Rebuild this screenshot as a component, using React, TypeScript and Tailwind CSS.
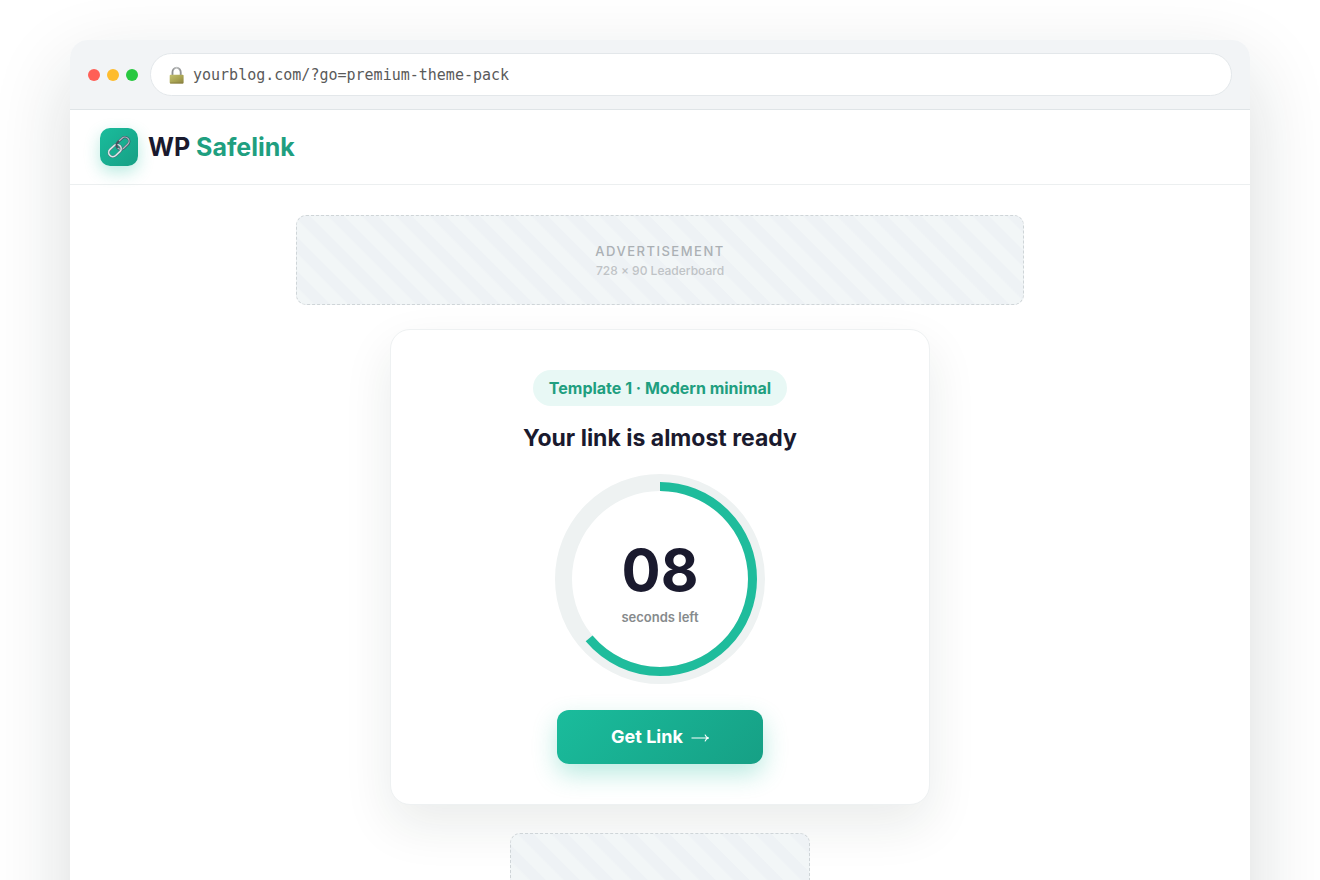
function LockIcon() {
  return (
    <svg width="16" height="18" viewBox="0 0 16 18" aria-hidden="true" className="shrink-0">
      <defs>
        <linearGradient id="lockBody" x1="0" x2="1" y1="0" y2="1">
          <stop offset="0" stopColor="#c3c070" />
          <stop offset="0.55" stopColor="#a8a352" />
          <stop offset="1" stopColor="#8b8240" />
        </linearGradient>
        <linearGradient id="lockShackle" x1="0" x2="1">
          <stop offset="0" stopColor="#8d8f90" />
          <stop offset="0.5" stopColor="#c4c6c6" />
          <stop offset="1" stopColor="#8f9192" />
        </linearGradient>
      </defs>
      <path d="M3.5 9.5V6.3a4.1 4.6 0 0 1 8.2 0v3.2" fill="none" stroke="url(#lockShackle)" strokeWidth="1.9" />
      <rect x="0.7" y="8.8" width="13.9" height="8.7" rx="0.9" fill="url(#lockBody)" />
      <path d="M1.2 17h12.9" stroke="#857c40" strokeWidth="0.8" />
    </svg>
  );
}

function ChainIcon() {
  return (
    <svg width="24" height="24" viewBox="0 0 24 24" fill="none" aria-hidden="true">
      <g transform="rotate(-43 12 12)">
        <rect x="10.4" y="7.8" width="14" height="8.4" rx="4.2" stroke="#41505f" strokeWidth="2.4" />
        <rect x="10.4" y="7.6" width="14" height="8.4" rx="4.2" stroke="#aeb9c3" strokeWidth="1.3" />
        <rect x="-0.4" y="7.8" width="14" height="8.4" rx="4.2" stroke="#56707a" strokeWidth="2.4" />
        <rect x="-0.4" y="7.6" width="14" height="8.4" rx="4.2" stroke="#dbe5e7" strokeWidth="1.6" />
        <path d="M10.4 11.8a4.2 4.2 0 0 1 4.2-4.2h1.4" stroke="#46525e" strokeWidth="2" />
      </g>
    </svg>
  );
}

function AdSlot({ className, size }: { className: string; size?: string }) {
  return (
    <aside
      aria-label="Advertisement"
      className={`flex w-full flex-col items-center justify-center rounded-[10px] border border-dashed border-[#cfd5d8] bg-[repeating-linear-gradient(45deg,#f2f6f7,#f2f6f7_11px,#eef2f5_13px,#eef2f5_23px,#f2f6f7_24px)] pt-0.5 ${className}`}
    >
      {size && (
        <>
          <span className="text-[13px] leading-5 font-medium tracking-[1.5px] text-[#abb0b4]">ADVERTISEMENT</span>
          <span className="text-xs leading-5 font-medium text-[#bfc3c6]">{size}</span>
        </>
      )}
    </aside>
  );
}

function Countdown({ seconds }: { seconds: number }) {
  return (
    <div className="relative mt-5 grid size-[210px] place-items-center" role="timer">
      <svg viewBox="0 0 210 210" className="absolute inset-0" aria-hidden="true">
        <circle cx="105" cy="105" r="96.5" fill="none" stroke="#eef2f2" strokeWidth="17" />
        <circle
          cx="105"
          cy="105"
          r="92.5"
          fill="none"
          stroke="#1fbc9c"
          strokeWidth="9"
          pathLength="360"
          strokeDasharray="230 360"
          transform="rotate(-90 105 105)"
        />
      </svg>
      <div className="relative flex flex-col items-center pt-2">
        <span className="text-[58px] leading-[62px] font-bold text-[#1a1a2e]">
          {String(seconds).padStart(2, "0")}
        </span>
        <span className="mt-1.5 text-[13px] leading-5 font-semibold text-[#868a8c]">seconds left</span>
      </div>
    </div>
  );
}

export default function App() {
  return (
    <div className="min-h-screen overflow-hidden bg-white px-5 pt-10 font-['Inter',sans-serif]">
      <div className="mx-auto max-w-[1180px] overflow-hidden rounded-t-[18px] bg-white shadow-[0_30px_80px_rgba(20,40,35,0.16)]">
        <div className="flex items-center gap-3 border-b border-[#dfe4e7] bg-[#f2f4f6] px-[18px] py-[13px]">
          <div className="flex gap-[7px]">
            <span className="size-3 rounded-full bg-[#ff5f57]" />
            <span className="size-3 rounded-full bg-[#febc2e]" />
            <span className="size-3 rounded-full bg-[#28c840]" />
          </div>
          <div className="flex h-[43px] flex-1 items-center gap-2 rounded-[22px] border border-[#e3e7ea] bg-white pl-[18px]">
            <LockIcon />
            <span className="font-['DejaVu_Sans_Mono',monospace] text-[15px] leading-6 text-[#5a5a5a]">
              yourblog.com/?go=premium-theme-pack
            </span>
          </div>
        </div>

        <header className="flex items-center gap-2.5 border-b border-[#eceff0] px-[30px] py-[18px]">
          <div className="grid size-[38px] place-items-center rounded-[10px] bg-linear-135 from-[#1abc9c] to-[#16a085] shadow-[0_6px_16px_rgba(26,188,156,0.3)]">
            <ChainIcon />
          </div>
          <span className="text-[25px] leading-8 font-bold text-[#1a1a2e]">
            WP <span className="text-[#1f9f80]">Safelink</span>
          </span>
        </header>

        <main className="flex flex-col items-center px-5 pt-[30px] pb-10">
          <AdSlot className="h-[90px] max-w-[728px]" size="728 × 90 Leaderboard" />

          <section className="mt-6 flex w-full max-w-[540px] flex-col items-center rounded-[20px] border border-[#eef1f2] bg-white p-10 shadow-[0_20px_50px_rgba(20,40,35,0.09)]">
            <span className="rounded-full bg-[#e8f8f5] px-4 py-1.5 text-base leading-6 font-bold text-[#1f9f80]">
              Template 1 · Modern minimal
            </span>
            <h1 className="mt-4 text-[23px] leading-8 font-bold text-[#1a1a2e]">Your link is almost ready</h1>
            <Countdown seconds={8} />
            <button
              type="button"
              className="mt-[26px] flex h-[54px] w-[206px] items-center justify-center gap-2 rounded-xl bg-linear-135 from-[#1abc9c] to-[#16a085] text-lg font-bold text-white shadow-[0_10px_24px_rgba(26,188,156,0.3)]"
            >
              Get Link
              <svg width="18" height="14" viewBox="0 0 18 14" fill="none" stroke="currentColor" strokeWidth="1.2" aria-hidden="true">
                <path d="M0.5 8h17M14 4.6c.6 1.700 1.800 2.900 3.600 3.400c-1.800 .5-3 1.700-3.600 3.400" />
              </svg>
            </button>
          </section>

          <AdSlot className="mt-7 h-[250px] max-w-[300px]" />
        </main>
      </div>
    </div>
  );
}
